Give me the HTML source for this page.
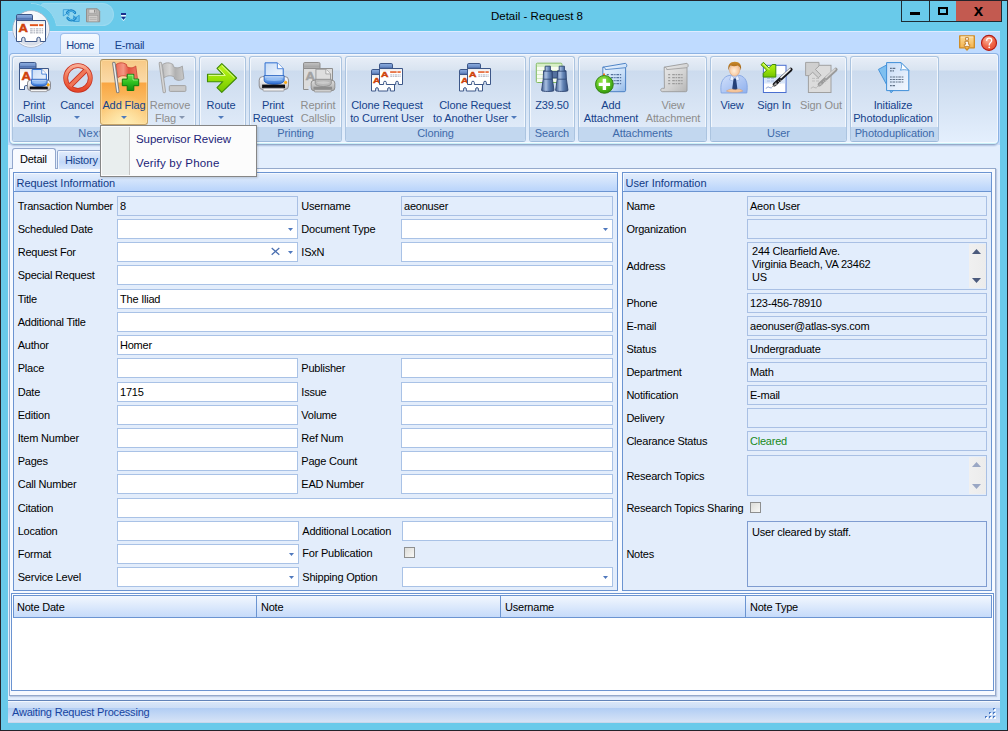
<!DOCTYPE html>
<html lang="en"><head><meta charset="utf-8"><title>Detail - Request 8</title>
<style>
*{box-sizing:border-box;margin:0;padding:0}
html,body{width:1008px;height:731px;overflow:hidden;background:#69caea}
body{font-family:"Liberation Sans",sans-serif;font-size:11px;color:#000;position:relative}
.a{position:absolute}
#win{position:absolute;left:0;top:0;width:1008px;height:731px;background:#69caea;border:1px solid #24232a}
.t{position:absolute;white-space:nowrap;line-height:14px;height:14px;letter-spacing:-0.22px}
.lbl{color:#000}
.fld{position:absolute;height:20px;border:1px solid #a9c2e6;background:#fff}
.fld.ro{background:#e2edfc;border-color:#a9c0e4}
.fld span{position:absolute;left:2px;top:2px;line-height:14px;white-space:nowrap;letter-spacing:-0.22px}
.dd{position:absolute;right:4px;top:8px;width:5px;height:3px}
.grp{position:absolute;top:56px;height:86px;border:1px solid #abc4e0;border-bottom-color:#9ebadb;border-radius:3px;background:linear-gradient(#e8eef7 0,#d9e4f1 13px,#ccdbee 14px,#dfeaf8 70px);box-shadow:inset 1px 1px 0 #f3f7fc,inset -1px 0 0 #f3f7fc}
.grp .cap{position:absolute;left:0;right:0;bottom:0;height:14px;background:#c2d7ef;color:#3e6aaa;text-align:center;line-height:12.5px;border-radius:0 0 2px 2px;white-space:nowrap;letter-spacing:-0.1px}
.rb{position:absolute;text-align:center;color:#15428b;line-height:13px;white-space:nowrap;letter-spacing:-0.1px}
.rb.dis{color:#8d8d8d}
.arr{display:inline-block;width:0;height:0;border-left:3px solid transparent;border-right:3px solid transparent;border-top:3.500px solid #4f7abc;vertical-align:middle;position:relative;top:-2px}
.dis .arr{border-top-color:#8696b0}
.ico{position:absolute;width:32px;height:32px}
.gb{position:absolute;border:1px solid #6b94d1;background:#e3edfb}
.gb .hd{position:absolute;left:0;right:0;top:0;height:19px;background:linear-gradient(#e4eefc,#b9d4fb);border-bottom:1px solid #6b94d1;color:#113a86;padding-left:2.5px;line-height:20px;letter-spacing:-0.02px;box-shadow:inset 1px 1px 0 #f3f8ff}
</style></head>
<body>
<div id="win">
<div class="a" style="left:-1px;top:-1px;width:1008px;height:731px">
<svg width="0" height="0" style="position:absolute"><defs>
<linearGradient id="gTab" x1="0" y1="0" x2="0" y2="1"><stop offset="0" stop-color="#8fb0e2"/><stop offset=".45" stop-color="#6d8fc8"/><stop offset=".5" stop-color="#5576b3"/><stop offset="1" stop-color="#6f92c9"/></linearGradient>
<linearGradient id="gTabG" x1="0" y1="0" x2="0" y2="1"><stop offset="0" stop-color="#c4c4c4"/><stop offset=".5" stop-color="#a9a9a9"/><stop offset="1" stop-color="#b8b8b8"/></linearGradient>
<linearGradient id="gCard" x1="0" y1="0" x2="0" y2="1"><stop offset="0" stop-color="#e9e9ea"/><stop offset=".25" stop-color="#fff"/><stop offset="1" stop-color="#fff"/></linearGradient>
<linearGradient id="gSilver" x1="0" y1="0" x2="0" y2="1"><stop offset="0" stop-color="#fdfdfd"/><stop offset=".5" stop-color="#e2e2e4"/><stop offset="1" stop-color="#b9b9bd"/></linearGradient>
<linearGradient id="gSilverG" x1="0" y1="0" x2="0" y2="1"><stop offset="0" stop-color="#dedede"/><stop offset="1" stop-color="#a8a8a8"/></linearGradient>
<linearGradient id="gLid" x1="0" y1="0" x2="0" y2="1"><stop offset="0" stop-color="#dbe9fc"/><stop offset=".4" stop-color="#74a9ef"/><stop offset="1" stop-color="#2a68cc"/></linearGradient>
<linearGradient id="gPage" x1="0" y1="0" x2="1" y2="1"><stop offset="0" stop-color="#c7dcf6"/><stop offset="1" stop-color="#f4f8fe"/></linearGradient>
<linearGradient id="gRed" x1="0" y1="0" x2="0" y2="1"><stop offset="0" stop-color="#f9ab93"/><stop offset=".5" stop-color="#f0704f"/><stop offset="1" stop-color="#e5472a"/></linearGradient>
<linearGradient id="gFlag" x1="0" y1="0" x2="1" y2="0"><stop offset="0" stop-color="#ee6a55"/><stop offset=".35" stop-color="#f49683"/><stop offset=".6" stop-color="#e2533f"/><stop offset="1" stop-color="#ef7a66"/></linearGradient>
<linearGradient id="gFlagG" x1="0" y1="0" x2="1" y2="0"><stop offset="0" stop-color="#bdbdbd"/><stop offset=".35" stop-color="#d6d6d6"/><stop offset=".6" stop-color="#b0b0b0"/><stop offset="1" stop-color="#c8c8c8"/></linearGradient>
<linearGradient id="gPole" x1="0" y1="0" x2="1" y2="0"><stop offset="0" stop-color="#9a9a9a"/><stop offset=".5" stop-color="#fafafa"/><stop offset="1" stop-color="#a5a5a5"/></linearGradient>
<linearGradient id="gGreen" x1="0" y1="0" x2="0" y2="1"><stop offset="0" stop-color="#6fe04a"/><stop offset=".5" stop-color="#2fc020"/><stop offset="1" stop-color="#0f8c10"/></linearGradient>
<linearGradient id="gLime" x1="0" y1="0" x2="0" y2="1"><stop offset="0" stop-color="#c0f520"/><stop offset=".5" stop-color="#9be308"/><stop offset="1" stop-color="#72c400"/></linearGradient>
<linearGradient id="gSteel" x1="0" y1="0" x2="1" y2="0"><stop offset="0" stop-color="#3f5d8e"/><stop offset=".35" stop-color="#a9c0e2"/><stop offset=".6" stop-color="#6384b6"/><stop offset="1" stop-color="#34507f"/></linearGradient>
<linearGradient id="gScroll" x1="0" y1="0" x2="1" y2="1"><stop offset="0" stop-color="#f2f8ff"/><stop offset=".6" stop-color="#c9dff8"/><stop offset="1" stop-color="#8fb6e6"/></linearGradient>
<linearGradient id="gScrollG" x1="0" y1="0" x2="1" y2="1"><stop offset="0" stop-color="#ececec"/><stop offset=".6" stop-color="#d2d2d2"/><stop offset="1" stop-color="#b4b4b4"/></linearGradient>
<radialGradient id="gBall" cx=".4" cy=".3" r=".8"><stop offset="0" stop-color="#9be84a"/><stop offset=".6" stop-color="#4fb81a"/><stop offset="1" stop-color="#2d8a0c"/></radialGradient>
<linearGradient id="gShirt" x1="0" y1="0" x2="1" y2="1"><stop offset="0" stop-color="#d4e2fb"/><stop offset="1" stop-color="#8fb0ee"/></linearGradient>
<radialGradient id="gFace" cx=".45" cy=".55" r=".6"><stop offset="0" stop-color="#fff0dd"/><stop offset="1" stop-color="#f6bd8d"/></radialGradient>
<linearGradient id="gHair" x1="0" y1="0" x2="0" y2="1"><stop offset="0" stop-color="#c98a2a"/><stop offset="1" stop-color="#9a5a14"/></linearGradient>
<radialGradient id="gApp" cx=".5" cy=".25" r=".9"><stop offset="0" stop-color="#ffffff"/><stop offset=".45" stop-color="#eef1f6"/><stop offset=".75" stop-color="#cfd6e2"/><stop offset="1" stop-color="#f4f6fa"/></radialGradient>
<radialGradient id="gHelp" cx=".4" cy=".3" r=".8"><stop offset="0" stop-color="#fbb49c"/><stop offset=".55" stop-color="#ef6648"/><stop offset="1" stop-color="#e4492e"/></radialGradient>
<linearGradient id="gInfo" x1="0" y1="0" x2="0" y2="1"><stop offset="0" stop-color="#fbdc9c"/><stop offset="1" stop-color="#f3ab3f"/></linearGradient>
<linearGradient id="gRef" x1="0" y1="0" x2="1" y2="1"><stop offset="0" stop-color="#7fd0f2"/><stop offset="1" stop-color="#1f78c2"/></linearGradient>
</defs></svg>
<div class="t" style="left:437px;top:9px;width:200px;text-align:center;font-size:11.5px;letter-spacing:0">Detail - Request 8</div>
<div class="a" style="left:901px;top:1px;width:101px;height:21px;border:1px solid #1d2b33;border-top:none;background:#69caea"></div>
<div class="a" style="left:929px;top:1px;width:1px;height:21px;background:#1d2b33"></div>
<div class="a" style="left:956px;top:1px;width:45px;height:20px;background:#c35a50"></div>
<div class="a" style="left:910px;top:12px;width:10px;height:3px;background:#000"></div>
<div class="a" style="left:938px;top:7px;width:10px;height:8px;border:2px solid #000"></div>
<div class="a" style="left:956px;top:1px;width:45px;height:20px;text-align:center;font-weight:bold;font-size:17px;line-height:19px;letter-spacing:0">x</div>
<div class="a" style="left:41px;top:3px;width:73px;height:23px;border-radius:3px 12px 12px 0;background:#8fd5ee;border:1px solid #9bdaf0;border-left:none"></div>
<div class="a" style="left:5px;top:3px;width:52px;height:52px;border-radius:26px;background:#69caea;border:1px solid #9bdaf0;clip-path:inset(0 0 29px 26px)"></div>
<div class="a" style="left:6px;top:4px;width:50px;height:50px;border-radius:25px;background:#69caea"></div>
<svg class="a" style="left:60px;top:5px" width="20" height="20" viewBox="60 5 20 20"><path d="M63.300 9.700h5.600v5.800l-2.100-1.900-3.500 2.400Z" fill="#86d3f5" stroke="#2f97d3" stroke-width=".8" stroke-linejoin="round"/><path d="M79.200 21.500h-5.600v-5.800l2.100 1.900 3.500-2.400Z" fill="#66c1ef" stroke="#2f97d3" stroke-width=".8" stroke-linejoin="round"/><path d="M67.700 18.300a4.600 4.600 0 0 0 7.800-.2M74.900 12.500a4.600 4.600 0 0 0-7.800.2" fill="none" stroke="#1d86c6" stroke-width="2.500" stroke-linecap="round"/><path d="M69.800 10.800c2.600-.8 5 1 5.600 3.200M72.800 20c-2.600.8-5-1-5.600-3.200" fill="none" stroke="#1d86c6" stroke-width="1.600"/><path d="M67.900 18.300a4.600 4.600 0 0 0 7.400-.2M74.700 12.500a4.600 4.600 0 0 0-7.400.2" fill="none" stroke="#62c2f0" stroke-width=".9" stroke-linecap="round"/></svg>
<svg class="a" style="left:84px;top:5px" width="20" height="20" viewBox="84 5 20 20"><path d="M86.500 8.800h10.800l2.400 2.400v10.600h-13.200Z" fill="#b4b2b0" stroke="#918f8d" stroke-width="1" stroke-linejoin="round"/><rect x="89" y="9.300" width="7.400" height="3.800" fill="#dad8d6" stroke="#999" stroke-width=".5"/><rect x="94" y="9.800" width="1.400" height="2.800" fill="#8f8d8b"/><rect x="88.400" y="15.600" width="9.400" height="6" fill="#cfcdcb" stroke="#9d9b99" stroke-width=".5"/><path d="M89.600 17.600h7M89.600 19.400h7" stroke="#aaa8a6" stroke-width=".7"/></svg>
<svg class="a" style="left:121px;top:13px" width="5" height="9" viewBox="0 0 5 9"><rect x="0" y="0" width="5" height="2" fill="#1b2f8c"/><rect x="0" y="2" width="5" height="1.600" fill="#eaf7fd"/><path d="M0 3.800h5L2.500 6.800z" fill="#1b2f8c"/><path d="M.6 5.600l1.900 2.200 1.900-2.200" fill="none" stroke="#eaf7fd" stroke-width=".8"/></svg>
<div class="a" style="left:8px;top:31px;width:992px;height:114px;background:#bfdbff;border-top:1px solid #deebff"></div>
<svg class="a" style="left:956px;top:32px" width="22" height="22" viewBox="956 32 22 22"><path d="M959.700 35.800h14.600v12h-5.300l-2 2.300-2-2.300h-5.300Z" fill="url(#gInfo)" stroke="#cf8a22" stroke-width="1.300" stroke-linejoin="round"/><path d="M960.800 37h12.400" stroke="#fdeccb" stroke-width=".9"/><path d="M965.600 37.600h2.800v2.600h-2.800ZM965 41.300h3.400v3h1.300v2h-5.400v-2h1.400v-1.200h-.7Z" fill="#fff" stroke="#b4701a" stroke-width=".8" stroke-linejoin="round"/></svg>
<svg class="a" style="left:978px;top:32px" width="22" height="22" viewBox="978 32 22 22"><circle cx="989" cy="42.900" r="7.500" fill="url(#gHelp)" stroke="#b31a14" stroke-width="1.100"/><path d="M986.700 40.300c.2-2.800 5-2.800 5 .1 0 1.900-2.500 2.300-2.500 4.600" fill="none" stroke="#fff" stroke-width="1.300" stroke-linecap="round"/><circle cx="989.200" cy="47.300" r=".9" fill="#fff"/></svg>
<div class="a" style="left:60px;top:33px;width:40px;height:23px;border:1px solid #9ebfeb;border-bottom:none;border-radius:4px 4px 0 0;background:linear-gradient(#f4f9ff,#e3edfb)"></div>
<div class="t" style="left:60px;top:38px;width:40px;text-align:center;color:#15428b;letter-spacing:-0.4px">Home</div>
<div class="t" style="left:109.500px;top:38px;width:40px;text-align:center;color:#15428b;letter-spacing:-0.3px">E-mail</div>
<div class="a" style="left:8px;top:145px;width:992px;height:578px;background:#e3eefd"></div>
<div class="a" style="left:9px;top:53px;width:990px;height:92px;border:1px solid #8db2e3;border-bottom-color:#97a9c9;border-radius:4px 4px 5px 5px;background:linear-gradient(#e9eff8 0,#dce6f3 16px,#c9d9ed 17px,#e4effd 88px);box-shadow:inset 0 -1px 0 #c8f0f8,inset 0 -2px 0 #f5faff,inset 0 0 0 1px #f2f7fd,0 1px 0 #bacde8,0 2px 0 #d6e3f6"></div>
<div class="a" style="left:61px;top:53px;width:38px;height:2px;background:#e0ebf9"></div>
<div class="grp" style="left:12px;width:184px"><div class="cap" style="letter-spacing:.35px">Next Step</div></div>
<div class="grp" style="left:199px;width:47px"><div class="cap"></div></div>
<div class="grp" style="left:249px;width:93px"><div class="cap">Printing</div></div>
<div class="grp" style="left:345px;width:181px"><div class="cap">Cloning</div></div>
<div class="grp" style="left:529px;width:46px"><div class="cap">Search</div></div>
<div class="grp" style="left:578px;width:129px"><div class="cap">Attachments</div></div>
<div class="grp" style="left:710px;width:137px"><div class="cap">User</div></div>
<div class="grp" style="left:850px;width:89px"><div class="cap">Photoduplication</div></div>
<div class="a" style="left:100px;top:59px;width:48px;height:66px;border:1px solid #c6a468;border-top-color:#9f8a5c;border-radius:3px;background:radial-gradient(ellipse 26px 30px at 50% 100%,rgba(255,243,190,.85),rgba(255,235,170,0) 100%),linear-gradient(#f7c986 0,#fadaa8 22px,#f9a643 23px,#fbbf68 44px,#fdd893 64px);box-shadow:inset 0 0 0 1px rgba(255,232,180,.45)"></div>
<svg class="a" style="left:14px;top:58px" width="40" height="40" viewBox="14 58 40 40"><rect x="19.5" y="62.5" width="16.5" height="8" rx="1.3" fill="url(#gTab)" stroke="#3d5788" stroke-width="1"/><path d="M19.5 68.5H48.5V89.5H19.5Z" fill="url(#gCard)" stroke="#3d5788" stroke-width="1" stroke-linejoin="round"/><text transform="translate(21.40 79.88) scale(1.296 1)" font-size="10.05" font-weight="bold" fill="#cf420b" stroke="#cf420b" stroke-width=".45" font-family="Liberation Sans, sans-serif">A</text><rect x="24.5" y="86" width="4" height="4.5" fill="#d9e4f3"/><path d="M24.5 90V86.8a1.2 1.2 0 0 1 1.2-1.2H28" fill="none" stroke="#3d5788"/><path d="M32.1 69.49H41.76L46.36 74.08999999999999V83.3H32.1Z" fill="url(#gPage)" stroke="#2f6fd0" stroke-width="1" stroke-linejoin="round"/><path d="M41.76 69.49V74.08999999999999H46.36" fill="#fff" stroke="#2f6fd0" stroke-width=".8" stroke-linejoin="round"/><rect x="27.5" y="80.3" width="23" height="10.12" rx="2.76" fill="url(#gSilver)" stroke="#8c8c92" stroke-width="1"/><path d="M31.41 79.3H47.05V83.336a7.82 3.0359999999999996 0 0 1-15.64 0Z" fill="url(#gLid)" stroke="#1f5cc0" stroke-width=".9"/><ellipse cx="39.230000000000004" cy="82.5264" rx="6.210000000000001" ry="1.3155999999999999" fill="#9cc3f5" opacity=".8"/><rect x="29.8" y="86.5744" width="17.94" height="2.7324" fill="#0d0d12"/><rect x="30.490000000000002" y="89.408" width="16.56" height="2.2264" rx=".8" fill="#f4f4f4" stroke="#8c8c92" stroke-width=".8"/><circle cx="48.2" cy="84.854" r="1.25" fill="#ffb400" stroke="#f08a00" stroke-width=".5"/></svg>
<div class="rb" style="left:-26px;top:99px;width:120px">Print<br>Callslip</div>
<svg class="a" style="left:57px;top:58px" width="40" height="40" viewBox="57 58 40 40"><g fill="none"><circle cx="78" cy="78" r="12.3" stroke="#c7301f" stroke-width="4.800"/><path d="M69.6 86.4L86.4 69.6" stroke="#c7301f" stroke-width="5.200"/><circle cx="78" cy="78" r="12.3" stroke="url(#gRed)" stroke-width="3.3"/><path d="M70 86L86 70" stroke="#f07658" stroke-width="3.600"/></g></svg>
<div class="rb" style="left:17px;top:99px;width:120px">Cancel<br><span class="arr"></span></div>
<svg class="a" style="left:104px;top:58px" width="40" height="40" viewBox="104 58 40 40"><path d="M115.8 64.8c3.200-2.600 7.400-2.600 10.800-.2l.2 2c3 1.800 6.200 1.600 9-.6l1.600 12.600c-3 2.200-6.400 2.400-9.400.4l-.3-2c-3-1.800-6.800-1.800-10 .800Z" fill="url(#gFlag)" stroke="#c9442f" stroke-width=".8" stroke-linejoin="round"/><path d="M113.89999999999999 63.6L117.8 91.6" stroke="#7d7d7d" stroke-width="3.500" stroke-linecap="round"/><path d="M113.89999999999999 63.6L117.8 91.6" stroke="#eeeeee" stroke-width="1.500" stroke-linecap="round"/><path d="M127.2 74.3h6.6v4.8h4.9v6.6h-4.9v4.8h-6.6v-4.8h-4.9v-6.6h4.9Z" fill="url(#gGreen)" stroke="#0b7d0d" stroke-width="1" stroke-linejoin="round"/><path d="M128 75.2h5v4.8h4.8" fill="none" stroke="#b5f59a" stroke-width=".9" opacity=".8"/></svg>
<div class="rb" style="left:64px;top:99px;width:120px">Add Flag<br><span class="arr"></span></div>
<svg class="a" style="left:150px;top:58px" width="40" height="40" viewBox="150 58 40 40"><path d="M162.29999999999998 64.8c3.200-2.600 7.400-2.600 10.800-.2l.2 2c3 1.800 6.200 1.600 9-.6l1.600 12.600c-3 2.200-6.400 2.400-9.400.4l-.3-2c-3-1.800-6.800-1.800-10 .800Z" fill="url(#gFlagG)" stroke="#9d9d9d" stroke-width=".8" stroke-linejoin="round"/><path d="M160.4 63.6L164.29999999999998 91.6" stroke="#a8a8a8" stroke-width="3.500" stroke-linecap="round"/><path d="M160.4 63.6L164.29999999999998 91.6" stroke="#d6d6d6" stroke-width="1.500" stroke-linecap="round"/><rect x="169.3" y="85.6" width="16.6" height="5.8" rx="1" fill="#c9c9c9" stroke="#a3a3a3"/></svg>
<div class="rb dis" style="left:110px;top:99px;width:120px">Remove<br>Flag <span class="arr"></span></div>
<svg class="a" style="left:201px;top:58px" width="40" height="40" viewBox="201 58 40 40"><path d="M221.8 63.6L236.6 78 221.8 92.4 217 87.6 222.8 81.7H207.5V74.3H222.8L217 68.4Z" fill="url(#gLime)" stroke="#3f8a06" stroke-width="1.1" stroke-linejoin="round"/><path d="M221.8 65.4L234.6 78M208.6 75.4H225.3L218.8 68.4" fill="none" stroke="#e9ffb0" stroke-width="1" opacity=".9"/></svg>
<div class="rb" style="left:161px;top:99px;width:120px">Route<br><span class="arr"></span></div>
<svg class="a" style="left:253px;top:58px" width="40" height="40" viewBox="253 58 40 40"><path d="M265.06 62.82899999999999H277.366L283.226 68.689V79.6H265.06Z" fill="url(#gPage)" stroke="#2f6fd0" stroke-width="1" stroke-linejoin="round"/><path d="M277.366 62.82899999999999V68.689H283.226" fill="#fff" stroke="#2f6fd0" stroke-width=".8" stroke-linejoin="round"/><rect x="259.2" y="76.6" width="29.3" height="12.892000000000001" rx="3.516" fill="url(#gSilver)" stroke="#8c8c92" stroke-width="1"/><path d="M264.181 75.6H284.105V80.46759999999999a9.962000000000002 3.8676000000000004 0 0 1-19.924000000000003 0Z" fill="url(#gLid)" stroke="#1f5cc0" stroke-width=".9"/><ellipse cx="274.143" cy="79.43624" rx="7.9110000000000005" ry="1.6759600000000001" fill="#9cc3f5" opacity=".8"/><rect x="262.13" y="84.59304" width="22.854000000000003" height="3.4808400000000006" fill="#0d0d12"/><rect x="263.009" y="88.2028" width="21.096" height="2.83624" rx=".8" fill="#f4f4f4" stroke="#8c8c92" stroke-width=".8"/><circle cx="285.57" cy="82.4014" r="1.25" fill="#ffb400" stroke="#f08a00" stroke-width=".5"/></svg>
<div class="rb" style="left:213px;top:99px;width:120px">Print<br>Request</div>
<svg class="a" style="left:298px;top:58px" width="40" height="40" viewBox="298 58 40 40"><rect x="303.5" y="62.5" width="16.5" height="8" rx="1.3" fill="url(#gTabG)" stroke="#8f8f8f" stroke-width="1"/><path d="M303.5 68.5H332.5V89.5H303.5Z" fill="#dcdcdc" stroke="#8f8f8f" stroke-width="1" stroke-linejoin="round"/><text transform="translate(305.40 79.88) scale(1.296 1)" font-size="10.05" font-weight="bold" fill="#a2a2a2" stroke="#a2a2a2" stroke-width=".45" font-family="Liberation Sans, sans-serif">A</text><rect x="308.5" y="86" width="4" height="4.5" fill="#d5e0f0"/><path d="M315.92 69.208H325.83199999999994L330.55199999999996 73.928V83.3H315.92Z" fill="#dedede" stroke="#9a9a9a" stroke-width="1" stroke-linejoin="round"/><path d="M325.83199999999994 69.208V73.928H330.55199999999996" fill="#f0f0f0" stroke="#9a9a9a" stroke-width=".8" stroke-linejoin="round"/><rect x="311.2" y="80.3" width="23.6" height="10.384" rx="2.832" fill="url(#gSilverG)" stroke="#909090" stroke-width="1"/><path d="M315.212 79.3H331.26V83.4152a8.024000000000001 3.1152 0 0 1-16.048000000000002 0Z" fill="#b9b9b9" stroke="#8f8f8f" stroke-width=".9"/><ellipse cx="323.236" cy="82.58448" rx="6.372000000000001" ry="1.34992" fill="#cfcfcf" opacity=".8"/><rect x="313.56" y="86.73808" width="18.408" height="2.8036800000000004" fill="#8d8d8d"/><rect x="314.268" y="89.6456" width="16.992" height="2.2844800000000003" rx=".8" fill="#d8d8d8" stroke="#909090" stroke-width=".8"/></svg>
<div class="rb dis" style="left:258px;top:99px;width:120px">Reprint<br>Callslip</div>
<svg class="a" style="left:367px;top:58px" width="40" height="40" viewBox="367 58 40 40"><rect x="371.5" y="69.5" width="9" height="7" rx="1.3" fill="url(#gTab)" stroke="#3d5788" stroke-width="1"/><path d="M371.5 74.5H394.5V91.0H390.38V89.01a1.35 1.35 0 0 0-2.70 0V91.0H378.32V89.01a1.35 1.35 0 0 0-2.70 0V91.0H371.5Z" fill="url(#gCard)" stroke="#3d5788" stroke-width="1" stroke-linejoin="round"/><text transform="translate(373.01 83.44) scale(1.308 1)" font-size="7.89" font-weight="bold" fill="#cf420b" stroke="#cf420b" stroke-width=".45" font-family="Liberation Sans, sans-serif">A</text><rect x="379.5" y="63.5" width="13" height="7" rx="1.3" fill="url(#gTab)" stroke="#3d5788" stroke-width="1"/><path d="M379.5 68.5H402.5V84.5H398.38V82.57a1.35 1.35 0 0 0-2.70 0V84.5H386.32V82.57a1.35 1.35 0 0 0-2.70 0V84.5H379.5Z" fill="url(#gCard)" stroke="#3d5788" stroke-width="1" stroke-linejoin="round"/><text transform="translate(381.01 77.17) scale(1.349 1)" font-size="7.66" font-weight="bold" fill="#cf420b" stroke="#cf420b" stroke-width=".45" font-family="Liberation Sans, sans-serif">A</text><rect x="390.13" y="71.31" width="6.50" height="1.48" fill="#e2541a"/><rect x="397.42" y="71.31" width="3.33" height="1.48" fill="#e2541a"/><path d="M390.29 74.87h10.31" stroke="#9aa0ae" stroke-width="0.74" stroke-dasharray="2.06 0.63 1.27 0.63"/><path d="M390.29 76.39h10.31" stroke="#9aa0ae" stroke-width="0.74" stroke-dasharray="2.06 0.63 1.27 0.63"/></svg>
<div class="rb" style="left:327px;top:99px;width:120px">Clone Request<br>to Current User</div>
<svg class="a" style="left:455px;top:58px" width="40" height="40" viewBox="455 58 40 40"><rect x="459.5" y="69.5" width="9" height="7" rx="1.3" fill="url(#gTab)" stroke="#3d5788" stroke-width="1"/><path d="M459.5 74.5H482.5V91.0H478.38V89.01a1.35 1.35 0 0 0-2.70 0V91.0H466.32V89.01a1.35 1.35 0 0 0-2.70 0V91.0H459.5Z" fill="url(#gCard)" stroke="#3d5788" stroke-width="1" stroke-linejoin="round"/><text transform="translate(461.01 83.44) scale(1.308 1)" font-size="7.89" font-weight="bold" fill="#cf420b" stroke="#cf420b" stroke-width=".45" font-family="Liberation Sans, sans-serif">A</text><rect x="467.5" y="63.5" width="13" height="7" rx="1.3" fill="url(#gTab)" stroke="#3d5788" stroke-width="1"/><path d="M467.5 68.5H490.5V84.5H486.38V82.57a1.35 1.35 0 0 0-2.70 0V84.5H474.32V82.57a1.35 1.35 0 0 0-2.70 0V84.5H467.5Z" fill="url(#gCard)" stroke="#3d5788" stroke-width="1" stroke-linejoin="round"/><text transform="translate(469.01 77.17) scale(1.349 1)" font-size="7.66" font-weight="bold" fill="#cf420b" stroke="#cf420b" stroke-width=".45" font-family="Liberation Sans, sans-serif">A</text><rect x="478.13" y="71.31" width="6.50" height="1.48" fill="#e2541a"/><rect x="485.42" y="71.31" width="3.33" height="1.48" fill="#e2541a"/><path d="M478.29 74.87h10.31" stroke="#9aa0ae" stroke-width="0.74" stroke-dasharray="2.06 0.63 1.27 0.63"/><path d="M478.29 76.39h10.31" stroke="#9aa0ae" stroke-width="0.74" stroke-dasharray="2.06 0.63 1.27 0.63"/></svg>
<div class="rb" style="left:415px;top:99px;width:120px">Clone Request<br>to Another User <span class="arr"></span></div>
<svg class="a" style="left:532px;top:58px" width="40" height="40" viewBox="532 58 40 40"><rect x="536.3" y="63.2" width="25.6" height="19.3" rx="1" fill="#f6fbef" stroke="#7fba5c"/><rect x="537" y="64" width="24.2" height="3" fill="#d7eec6"/><path d="M537 70.5h24M537 74.5h24M537 78.5h24M544.5 67v15" stroke="#cfe8bd" stroke-width=".9"/><rect x="552" y="71.5" width="6" height="6.5" fill="#54719f" stroke="#2c4470" stroke-width=".8"/><path d="M545.1999999999999 66.2h5.2v4.6h1.6l.4 8.4 1.6 11.2c0 1.4-12.4 1.4-12.4 0l1.6-11.2.4-8.4h1.6Z" fill="url(#gSteel)" stroke="#2c4470" stroke-width=".9" stroke-linejoin="round"/><path d="M543.4 71.2h8.8M543.1999999999999 79.2h9.2" stroke="#2c4470" stroke-width=".8"/><path d="M559.1999999999999 66.2h5.2v4.6h1.6l.4 8.4 1.6 11.2c0 1.4-12.4 1.4-12.4 0l1.6-11.2.4-8.4h1.6Z" fill="url(#gSteel)" stroke="#2c4470" stroke-width=".9" stroke-linejoin="round"/><path d="M557.4 71.2h8.8M557.1999999999999 79.2h9.2" stroke="#2c4470" stroke-width=".8"/></svg>
<div class="rb" style="left:492px;top:99px;width:120px">Z39.50<br></div>
<svg class="a" style="left:591px;top:58px" width="40" height="40" viewBox="591 58 40 40"><path d="M602.8000000000001 67.2L625.6 63.3c1.6 1.2 1.6 3.4 0 4.4V90.4c0 .8-.6 1.3-1.4 1.3H600.8000000000001c-1.8-.3-2.2-3 .2-3.4h2Z" fill="url(#gScroll)" stroke="#3f78bf" stroke-width=".9" stroke-linejoin="round"/><path d="M602.8000000000001 67.2c1.6-.2 2.6 1 2.6 2.4L625.6 67.7" fill="none" stroke="#3f78bf" stroke-width=".8"/><path d="M606.8000000000001 74.6h2M610.8000000000001 74.6h11" stroke="#54729e" stroke-width="1.2" stroke-dasharray="2.6 .8 1.4 .8"/><path d="M606.8000000000001 77.6h2M610.8000000000001 77.6h11" stroke="#54729e" stroke-width="1.2" stroke-dasharray="2.6 .8 1.4 .8"/><path d="M606.8000000000001 80.6h2M610.8000000000001 80.6h11" stroke="#54729e" stroke-width="1.2" stroke-dasharray="2.6 .8 1.4 .8"/><path d="M606.8000000000001 83.6h2M610.8000000000001 83.6h11" stroke="#54729e" stroke-width="1.2" stroke-dasharray="2.6 .8 1.4 .8"/><rect x="603" y="73.5" width="2" height="2" fill="#f07020"/><circle cx="604.4" cy="84.4" r="8.9" fill="url(#gBall)" stroke="#2f7d10" stroke-width=".9"/><path d="M602.7 78.7h3.4v4h4v3.4h-4v4h-3.4v-4h-4v-3.4h4Z" fill="#fff"/></svg>
<div class="rb" style="left:551px;top:99px;width:120px">Add<br>Attachment</div>
<svg class="a" style="left:653px;top:58px" width="40" height="40" viewBox="653 58 40 40"><path d="M664.2 67.2L687.0 63.3c1.6 1.2 1.6 3.4 0 4.4V90.4c0 .8-.6 1.3-1.4 1.3H662.2c-1.8-.3-2.2-3 .2-3.4h2Z" fill="url(#gScrollG)" stroke="#9a9a9a" stroke-width=".9" stroke-linejoin="round"/><path d="M664.2 67.2c1.6-.2 2.6 1 2.6 2.4L687.0 67.7" fill="none" stroke="#9a9a9a" stroke-width=".8"/><path d="M668.2 74.6h2M672.2 74.6h11" stroke="#9c9c9c" stroke-width="1.2" stroke-dasharray="2.6 .8 1.4 .8"/><path d="M668.2 77.6h2M672.2 77.6h11" stroke="#9c9c9c" stroke-width="1.2" stroke-dasharray="2.6 .8 1.4 .8"/><path d="M668.2 80.6h2M672.2 80.6h11" stroke="#9c9c9c" stroke-width="1.2" stroke-dasharray="2.6 .8 1.4 .8"/><path d="M668.2 83.6h2M672.2 83.6h11" stroke="#9c9c9c" stroke-width="1.2" stroke-dasharray="2.6 .8 1.4 .8"/></svg>
<div class="rb dis" style="left:613px;top:99px;width:120px">View<br>Attachment</div>
<svg class="a" style="left:712px;top:58px" width="40" height="40" viewBox="712 58 40 40"><path d="M721.200 93c-1.200-8 .400-14.400 6-17l7.400-1.800 7 1.800c5.400 2.600 6.400 9 5.200 17Z" fill="url(#gShirt)" stroke="#7c9fe0" stroke-width=".8"/><path d="M731.2 75.4l3.400 3.200 3.400-3.200 1.600 4.400-5 1.600-5-1.600Z" fill="#eaf1fd" stroke="#88a6e0" stroke-width=".6"/><path d="M733.6 78.6h2.400l1.400 10.400-2.600 2.600-2.600-2.600Z" fill="#243f78"/><path d="M726.4 91c3-2 6-2.400 8.800-1.200 2.800-1.200 5.400-.8 7.600 1.200-2.400 1.800-13.600 1.800-16.400 0Z" fill="#f7c79c" stroke="#d99a68" stroke-width=".5"/><ellipse cx="734.6" cy="70.2" rx="5.1" ry="5.9" fill="url(#gFace)" stroke="#dfa06c" stroke-width=".5"/><path d="M728.6 70.400c-1.400-5.400 1.600-8.600 6.200-8.600 4.600 0 7.400 3.200 6 8.600-.4-2.800-1.400-4.400-3-5-2.200 1-5 1-7 .2-1.200 1-1.900 2.600-2.200 4.800Z" fill="url(#gHair)"/></svg>
<div class="rb" style="left:672px;top:99px;width:120px">View<br></div>
<svg class="a" style="left:754px;top:58px" width="40" height="40" viewBox="754 58 40 40"><rect x="763.4" y="65.300" width="22.600" height="27.200" fill="#fff" stroke="#4a6fd0" stroke-width="1"/><rect x="764.1999999999999" y="74" width="21" height="9.500" fill="#d8e6fa"/><path d="M767.0 78.400h7M767.0 81h7" stroke="#a8bce0" stroke-width="1" stroke-dasharray="3 1"/><path d="M765.8 88.200c1.400-.2 1.800-1.400 2.600-1.200.8.200 1 1 3.400.8" fill="none" stroke="#5d78b8" stroke-width=".8"/><path d="M790.6999999999999 69.600L774.6 84.400" stroke="#16161a" stroke-width="3.800" stroke-linecap="round"/><path d="M790.0 69.200L781.0 77.500" stroke="#f4f4f4" stroke-width="1.700" stroke-linecap="round"/><path d="M776.0 82.200l-3.600 4.400 4.800-2.200Z" fill="#b9b9b9" stroke="#555" stroke-width=".5"/><path d="M780.1999999999999 79.700l2.400 2.400M778.4 81.300l2.400 2.400" stroke="#d9d9d9" stroke-width=".9"/><path d="M763.400 62.300l5.400 5.600 3.400-3.400h3.600v12.600h-12.600v-3.600l3.400-3.400-5.600-5.400Z" fill="url(#gLime)" stroke="#3f8a06" stroke-width="1" stroke-linejoin="round"/><path d="M763.300 63.800l6 6" stroke="#f0ffc8" stroke-width="1" opacity=".9"/></svg>
<div class="rb" style="left:714px;top:99px;width:120px">Sign In<br></div>
<svg class="a" style="left:801px;top:58px" width="40" height="40" viewBox="801 58 40 40"><rect x="808.4" y="65.300" width="22.600" height="27.200" fill="#dcdcdc" stroke="#a0a0a0" stroke-width="1"/><path d="M812.0 78.400h7M812.0 81h7" stroke="#bdbdbd" stroke-width="1" stroke-dasharray="3 1"/><path d="M810.8 88.200c1.400-.2 1.800-1.400 2.600-1.200.8.200 1 1 3.400.8" fill="none" stroke="#a9a9a9" stroke-width=".8"/><path d="M835.6999999999999 69.600L819.6 84.400" stroke="#9a9a9a" stroke-width="3.800" stroke-linecap="round"/><path d="M835.0 69.200L826.0 77.500" stroke="#d4d4d4" stroke-width="1.700" stroke-linecap="round"/><path d="M821.0 82.200l-3.600 4.400 4.800-2.200Z" fill="#bdbdbd" stroke="#9a9a9a" stroke-width=".5"/><path d="M825.1999999999999 79.700l2.400 2.400M823.4 81.300l2.400 2.400" stroke="#cfcfcf" stroke-width=".9"/><path d="M805.600 62.400h13.400v3.600l-3.600 3.400 5.600 5.800-2.600 2.600-5.800-5.600-3.400 3.400h-3.600Z" fill="#cfcfcf" stroke="#a3a3a3" stroke-width="1" stroke-linejoin="round"/></svg>
<div class="rb dis" style="left:761px;top:99px;width:120px">Sign Out<br></div>
<svg class="a" style="left:873px;top:58px" width="40" height="40" viewBox="873 58 40 40"><path d="M878.400 69.400l10-5.400 9 22.600-6.400 6.200Z" fill="#7fc0f0" stroke="#3f8fd8" stroke-width=".9" stroke-linejoin="round"/><path d="M886.600 62.600h14.400l7.800 7.800v20.200h-22.200Z" fill="url(#gPage)" stroke="#3f8fd8" stroke-width="1" stroke-linejoin="round"/><path d="M901 62.600c1 3.200.6 5.600-.6 7.600 2.600-.8 5.400-.6 8.400.2Z" fill="#fff" stroke="#3f8fd8" stroke-width=".8" stroke-linejoin="round"/><path d="M890 68.400h6M890 70.900h4M890 77h13.400M890 79.500h13.400M890 82h13.400M890 85.600h5" stroke="#5f7086" stroke-width="1.200" stroke-dasharray="1.8 .7 2.600 .7"/></svg>
<div class="rb" style="left:833px;top:99px;width:120px">Initialize<br>Photoduplication</div>
<div class="a" style="left:9px;top:168px;width:987px;height:528px;border:1px solid #94a9cc;background:#f7faff;box-shadow:1px 1px 1px rgba(120,140,180,.35)"></div>
<div class="a" style="left:57px;top:150px;width:50px;height:19px;border:1px solid #92a7cd;border-bottom:none;border-radius:2px 2px 0 0;background:linear-gradient(#e2edfc,#c6daf8 55%,#c1d7f8 60%,#d9e7fc);box-shadow:inset 1px 1px 0 #f1f6fe"></div>
<div class="t" style="left:65px;top:153px;color:#15428b">History</div>
<div class="a" style="left:12px;top:148px;width:44px;height:21px;border:1px solid #92a7cd;border-bottom:none;border-radius:3px 3px 0 0;background:#f7faff"></div>
<div class="t" style="left:20px;top:152px">Detail</div>
<div class="gb" style="left:13px;top:172px;width:605px;height:419px"><div class="hd">Request Information</div></div>
<div class="gb" style="left:622px;top:172px;width:370px;height:419px"><div class="hd">User Information</div></div>
<div class="t" style="left:17.7px;top:199px;color:#000">Transaction Number</div>
<div class="fld ro" style="left:117px;top:196px;width:181px;height:20px"><span>8</span></div>
<div class="t" style="left:301.3px;top:199px;color:#000">Username</div>
<div class="fld ro" style="left:401px;top:196px;width:212px;height:20px"><span>aeonuser</span></div>
<div class="t" style="left:17.7px;top:222px;color:#000">Scheduled Date</div>
<div class="fld" style="left:117px;top:219px;width:181px;height:20px"><svg class="dd" viewBox="0 0 5 3"><path d="M0 0h5L2.500 3z" fill="#4f78bd"/></svg></div>
<div class="t" style="left:301.3px;top:222px;color:#000">Document Type</div>
<div class="fld" style="left:401px;top:219px;width:212px;height:20px"><svg class="dd" viewBox="0 0 5 3"><path d="M0 0h5L2.500 3z" fill="#4f78bd"/></svg></div>
<div class="t" style="left:17.7px;top:245px;color:#000">Request For</div>
<div class="fld" style="left:117px;top:242px;width:181px;height:20px"><svg class="dd" viewBox="0 0 5 3"><path d="M0 0h5L2.500 3z" fill="#4f78bd"/></svg><svg class="a" style="right:17px;top:4px" width="9" height="9" viewBox="0 0 9 9"><path d="M.7 1l7.600 6.800M8.300 1l-7.600 6.800" stroke="#4a6fb0" stroke-width="1.250" fill="none"/></svg></div>
<div class="t" style="left:301.3px;top:245px;color:#000">ISxN</div>
<div class="fld" style="left:401px;top:242px;width:212px;height:20px"></div>
<div class="t" style="left:17.7px;top:268px;color:#000">Special Request</div>
<div class="fld" style="left:117px;top:265px;width:496px;height:20px"></div>
<div class="t" style="left:17.7px;top:292px;color:#000">Title</div>
<div class="fld" style="left:117px;top:289px;width:496px;height:20px"><span>The Iliad</span></div>
<div class="t" style="left:17.7px;top:315px;color:#000">Additional Title</div>
<div class="fld" style="left:117px;top:312px;width:496px;height:20px"></div>
<div class="t" style="left:17.7px;top:338px;color:#000">Author</div>
<div class="fld" style="left:117px;top:335px;width:496px;height:20px"><span>Homer</span></div>
<div class="t" style="left:17.7px;top:361px;color:#000">Place</div>
<div class="fld" style="left:117px;top:358px;width:181px;height:20px"></div>
<div class="t" style="left:301.3px;top:361px;color:#000">Publisher</div>
<div class="fld" style="left:401px;top:358px;width:212px;height:20px"></div>
<div class="t" style="left:17.7px;top:385px;color:#000">Date</div>
<div class="fld" style="left:117px;top:382px;width:181px;height:20px"><span>1715</span></div>
<div class="t" style="left:301.3px;top:385px;color:#000">Issue</div>
<div class="fld" style="left:401px;top:382px;width:212px;height:20px"></div>
<div class="t" style="left:17.7px;top:408px;color:#000">Edition</div>
<div class="fld" style="left:117px;top:405px;width:181px;height:20px"></div>
<div class="t" style="left:301.3px;top:408px;color:#000">Volume</div>
<div class="fld" style="left:401px;top:405px;width:212px;height:20px"></div>
<div class="t" style="left:17.7px;top:431px;color:#000">Item Number</div>
<div class="fld" style="left:117px;top:428px;width:181px;height:20px"></div>
<div class="t" style="left:301.3px;top:431px;color:#000">Ref Num</div>
<div class="fld" style="left:401px;top:428px;width:212px;height:20px"></div>
<div class="t" style="left:17.7px;top:454px;color:#000">Pages</div>
<div class="fld" style="left:117px;top:451px;width:181px;height:20px"></div>
<div class="t" style="left:301.3px;top:454px;color:#000">Page Count</div>
<div class="fld" style="left:401px;top:451px;width:212px;height:20px"></div>
<div class="t" style="left:17.7px;top:477px;color:#000">Call Number</div>
<div class="fld" style="left:117px;top:474px;width:181px;height:20px"></div>
<div class="t" style="left:301.3px;top:477px;color:#000">EAD Number</div>
<div class="fld" style="left:401px;top:474px;width:212px;height:20px"></div>
<div class="t" style="left:17.7px;top:501px;color:#000">Citation</div>
<div class="fld" style="left:117px;top:498px;width:496px;height:20px"></div>
<div class="t" style="left:17.7px;top:524px;color:#000">Location</div>
<div class="fld" style="left:117px;top:521px;width:182px;height:20px"></div>
<div class="t" style="left:302.3px;top:524px;color:#000">Additional Location</div>
<div class="fld" style="left:402px;top:521px;width:211px;height:20px"></div>
<div class="t" style="left:17.7px;top:547px;color:#000">Format</div>
<div class="fld" style="left:117px;top:544px;width:182px;height:20px"><svg class="dd" viewBox="0 0 5 3"><path d="M0 0h5L2.500 3z" fill="#4f78bd"/></svg></div>
<div class="t" style="left:302.3px;top:546px;color:#000">For Publication</div>
<div class="a" style="left:404px;top:547px;width:11px;height:11px;border:1px solid #8e8f8f;background:linear-gradient(135deg,#dcdcd8,#f8f8f6)"></div>
<div class="t" style="left:17.7px;top:570px;color:#000">Service Level</div>
<div class="fld" style="left:117px;top:567px;width:182px;height:20px"><svg class="dd" viewBox="0 0 5 3"><path d="M0 0h5L2.500 3z" fill="#4f78bd"/></svg></div>
<div class="t" style="left:302.3px;top:570px;color:#000">Shipping Option</div>
<div class="fld" style="left:402px;top:567px;width:211px;height:20px"><svg class="dd" viewBox="0 0 5 3"><path d="M0 0h5L2.500 3z" fill="#4f78bd"/></svg></div>
<div class="t" style="left:626.4px;top:199px;color:#000">Name</div>
<div class="fld ro" style="left:747px;top:196px;width:240px;height:20px"><span>Aeon User</span></div>
<div class="t" style="left:626.4px;top:222px;color:#000">Organization</div>
<div class="fld ro" style="left:747px;top:219px;width:240px;height:20px"></div>
<div class="t" style="left:626.4px;top:259px;color:#000">Address</div>
<div class="fld ro" style="left:747px;top:242px;width:240px;height:48px"><span style="left:4px;top:2px;line-height:13px;white-space:pre">244 Clearfield Ave.
Virginia Beach, VA 23462
US</span></div>
<div class="a" style="left:969px;top:244px;width:17px;height:44px;background:linear-gradient(90deg,#f0f0f0,#ececec)"></div>
<svg class="a" style="left:972px;top:249px" width="9" height="5" viewBox="0 0 9 5"><path d="M0 5h9l-4.5-5z" fill="#4b5a7c"/></svg>
<svg class="a" style="left:972px;top:278px" width="9" height="5" viewBox="0 0 9 5"><path d="M0 0h9l-4.5 5z" fill="#4b5a7c"/></svg>
<div class="t" style="left:626.4px;top:296px;color:#000">Phone</div>
<div class="fld ro" style="left:747px;top:293px;width:240px;height:20px"><span>123-456-78910</span></div>
<div class="t" style="left:626.4px;top:319px;color:#000">E-mail</div>
<div class="fld ro" style="left:747px;top:316px;width:240px;height:20px"><span>aeonuser@atlas-sys.com</span></div>
<div class="t" style="left:626.4px;top:342px;color:#000">Status</div>
<div class="fld ro" style="left:747px;top:339px;width:240px;height:20px"><span>Undergraduate</span></div>
<div class="t" style="left:626.4px;top:365px;color:#000">Department</div>
<div class="fld ro" style="left:747px;top:362px;width:240px;height:20px"><span>Math</span></div>
<div class="t" style="left:626.4px;top:388px;color:#000">Notification</div>
<div class="fld ro" style="left:747px;top:385px;width:240px;height:20px"><span>E-mail</span></div>
<div class="t" style="left:626.4px;top:411px;color:#000">Delivery</div>
<div class="fld ro" style="left:747px;top:408px;width:240px;height:20px"></div>
<div class="t" style="left:626.4px;top:434px;color:#000">Clearance Status</div>
<div class="fld ro" style="left:747px;top:431px;width:240px;height:20px"><span style="color:#1a8a1a">Cleared</span></div>
<div class="t" style="left:626.4px;top:469px;color:#000">Research Topics</div>
<div class="fld ro" style="left:747px;top:455px;width:240px;height:41px"></div>
<div class="a" style="left:969px;top:457px;width:17px;height:37px;background:linear-gradient(90deg,#f0f0f0,#ececec)"></div>
<svg class="a" style="left:972px;top:462px" width="9" height="5" viewBox="0 0 9 5"><path d="M0 5h9l-4.5-5z" fill="#9aa7c4"/></svg>
<svg class="a" style="left:972px;top:484px" width="9" height="5" viewBox="0 0 9 5"><path d="M0 0h9l-4.5 5z" fill="#9aa7c4"/></svg>
<div class="t" style="left:626.4px;top:501px;color:#000">Research Topics Sharing</div>
<div class="a" style="left:750px;top:502px;width:11px;height:11px;border:1px solid #8e8f8f;background:linear-gradient(135deg,#dcdcd8,#f8f8f6)"></div>
<div class="t" style="left:626.4px;top:547px;color:#000">Notes</div>
<div class="fld ro" style="left:747px;top:521px;width:240px;height:66px;border-color:#7f9cd0"><span style="left:4px;top:3px">User cleared by staff.</span></div>
<div class="a" style="left:11px;top:593px;width:983px;height:98px;border:1px solid #6b94d1;background:#fff"></div>
<div class="a" style="left:13px;top:595px;width:979px;height:23px;background:linear-gradient(#f2f7fe,#c6dbfa);border:1px solid #6b94d1"></div>
<div class="t" style="left:17px;top:600px">Note Date</div>
<div class="a" style="left:256px;top:596px;width:1px;height:21px;background:#6b94d1"></div>
<div class="t" style="left:261px;top:600px">Note</div>
<div class="a" style="left:500px;top:596px;width:1px;height:21px;background:#6b94d1"></div>
<div class="t" style="left:505px;top:600px">Username</div>
<div class="a" style="left:745px;top:596px;width:1px;height:21px;background:#6b94d1"></div>
<div class="t" style="left:750px;top:600px">Note Type</div>
<div class="a" style="left:8px;top:700px;width:992px;height:23px;background:linear-gradient(#6283b9 0,#6283b9 1px,#f4f8fe 1px,#f4f8fe 2px,#d9e6f9 2px,#ccddf6 8px,#b1cdf4 8px,#d6e3f6 22px,#bccbe0 23px)"></div>
<div class="t" style="left:12px;top:705px;color:#1744a0;letter-spacing:-0.2px">Awaiting Request Processing</div>
<svg class="a" style="left:985px;top:708px" width="11" height="11" viewBox="0 0 11 11"><rect x="8" y="0" width="2" height="2" fill="#4b7ac4"/><rect x="9" y="1" width="2" height="2" fill="#fff" opacity=".9"/><rect x="4" y="4" width="2" height="2" fill="#4b7ac4"/><rect x="5" y="5" width="2" height="2" fill="#fff" opacity=".9"/><rect x="8" y="4" width="2" height="2" fill="#4b7ac4"/><rect x="9" y="5" width="2" height="2" fill="#fff" opacity=".9"/><rect x="0" y="8" width="2" height="2" fill="#4b7ac4"/><rect x="1" y="9" width="2" height="2" fill="#fff" opacity=".9"/><rect x="4" y="8" width="2" height="2" fill="#4b7ac4"/><rect x="5" y="9" width="2" height="2" fill="#fff" opacity=".9"/><rect x="8" y="8" width="2" height="2" fill="#4b7ac4"/><rect x="9" y="9" width="2" height="2" fill="#fff" opacity=".9"/></svg>
<svg class="a" style="left:10px;top:8px" width="42" height="42" viewBox="10 8 42 42"><circle cx="31.100" cy="29" r="18.300" fill="url(#gApp)" stroke="#aab6c8" stroke-width=".9"/><path d="M13.500 31a17.700 17.700 0 0 0 35.200 0Z" fill="#dfe4ec" opacity=".55"/><circle cx="31.100" cy="29" r="17.300" fill="none" stroke="#fff" stroke-width="1" opacity=".8"/><rect x="16.5" y="14.5" width="16" height="8" rx="1.3" fill="url(#gTab)" stroke="#3d5788" stroke-width="1"/><path d="M16.5 20.5H45.5V41.5H40.30V38.97a1.70 1.70 0 0 0-3.40 0V41.5H25.10V38.97a1.70 1.70 0 0 0-3.40 0V41.5H16.5Z" fill="url(#gCard)" stroke="#3d5788" stroke-width="1" stroke-linejoin="round"/><text transform="translate(18.40 31.88) scale(1.296 1)" font-size="10.05" font-weight="bold" fill="#cf420b" stroke="#cf420b" stroke-width=".45" font-family="Liberation Sans, sans-serif">A</text><rect x="29.90" y="24.19" width="8.20" height="1.94" fill="#e2541a"/><rect x="39.10" y="24.19" width="4.20" height="1.94" fill="#e2541a"/><path d="M30.10 28.86h13.00" stroke="#9aa0ae" stroke-width="0.97" stroke-dasharray="2.60 0.80 1.60 0.80"/><path d="M30.10 30.85h13.00" stroke="#9aa0ae" stroke-width="0.97" stroke-dasharray="2.60 0.80 1.60 0.80"/><path d="M30.10 32.85h13.00" stroke="#9aa0ae" stroke-width="0.97" stroke-dasharray="2.60 0.80 1.60 0.80"/></svg>
<div class="a" style="left:100px;top:125px;width:157px;height:52px;border:1px solid #868686;background:#fcfcfc;box-shadow:1px 1px 2px rgba(0,0,0,.15)"></div>
<div class="a" style="left:102px;top:127px;width:27px;height:48px;background:#e9eeee"></div>
<div class="a" style="left:129px;top:127px;width:1px;height:48px;background:#c5c5c5"></div>
<div class="t" style="left:136px;top:132px;font-size:11.5px;color:#1c2478;letter-spacing:-0.05px">Supervisor Review</div>
<div class="t" style="left:136px;top:156px;font-size:11.5px;color:#1c2478;letter-spacing:.2px">Verify by Phone</div>
</div></div>
</body></html>
